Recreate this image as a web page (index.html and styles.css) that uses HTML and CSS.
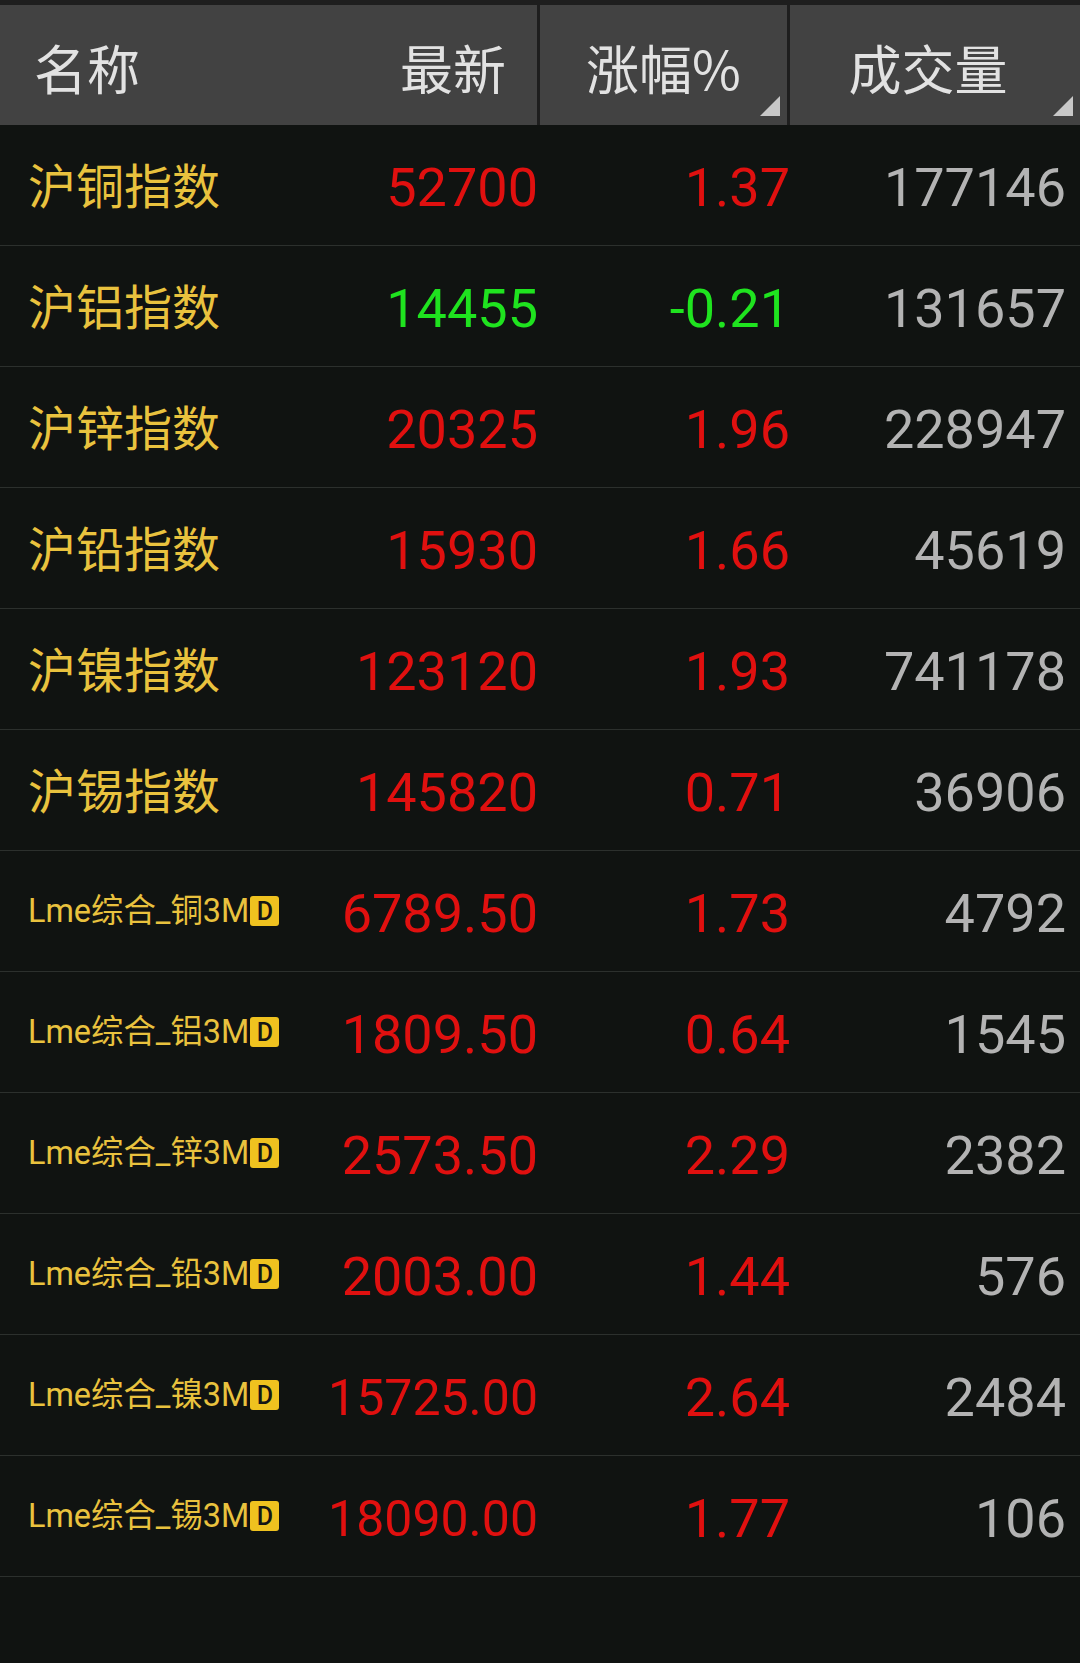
FILE: index.html
```html
<!DOCTYPE html>
<html lang="zh-CN">
<head>
<meta charset="utf-8">
<title>行情</title>
<link rel="stylesheet" href="styles.css">
</head>
<body>
<div class="page">
  <div class="topstrip"></div>
  <div class="header">
    <div class="hcell hfirst"><span>名称</span><span>最新</span></div>
    <div class="hcell hcenter">涨幅%<i class="sort"></i></div>
    <div class="hcell hcenter hlast">成交量<i class="sort"></i></div>
  </div>
  <div class="list">
    <div class="row"><div class="name">沪铜指数</div><div class="num up">52700</div><div class="num up">1.37</div><div class="num vol">177146</div></div>
    <div class="row"><div class="name">沪铝指数</div><div class="num down">14455</div><div class="num down">-0.21</div><div class="num vol">131657</div></div>
    <div class="row"><div class="name">沪锌指数</div><div class="num up">20325</div><div class="num up">1.96</div><div class="num vol">228947</div></div>
    <div class="row"><div class="name">沪铅指数</div><div class="num up">15930</div><div class="num up">1.66</div><div class="num vol">45619</div></div>
    <div class="row"><div class="name">沪镍指数</div><div class="num up">123120</div><div class="num up">1.93</div><div class="num vol">741178</div></div>
    <div class="row"><div class="name">沪锡指数</div><div class="num up">145820</div><div class="num up">0.71</div><div class="num vol">36906</div></div>
    <div class="row"><div class="name small">Lme综合_铜3M<span class="badge">D</span></div><div class="num up">6789.50</div><div class="num up">1.73</div><div class="num vol">4792</div></div>
    <div class="row"><div class="name small">Lme综合_铝3M<span class="badge">D</span></div><div class="num up">1809.50</div><div class="num up">0.64</div><div class="num vol">1545</div></div>
    <div class="row"><div class="name small">Lme综合_锌3M<span class="badge">D</span></div><div class="num up">2573.50</div><div class="num up">2.29</div><div class="num vol">2382</div></div>
    <div class="row"><div class="name small">Lme综合_铅3M<span class="badge">D</span></div><div class="num up">2003.00</div><div class="num up">1.44</div><div class="num vol">576</div></div>
    <div class="row"><div class="name small">Lme综合_镍3M<span class="badge">D</span></div><div class="num up fit">15725.00</div><div class="num up">2.64</div><div class="num vol">2484</div></div>
    <div class="row"><div class="name small">Lme综合_锡3M<span class="badge">D</span></div><div class="num up fit">18090.00</div><div class="num up">1.77</div><div class="num vol">106</div></div>
  </div>
</div>
</body>
</html>
```
FILE: styles.css
```css
* { box-sizing: border-box; margin: 0; padding: 0; }
html, body { background: #101311; }
body {
  width: 1080px;
  height: 1663px;
  overflow: hidden;
  font-family: Roboto, "Noto Sans CJK SC", sans-serif;
}
.page { display: flex; flex-direction: column; }
.topstrip { height: 5px; background: #1e1e1e; }
.header {
  display: grid;
  grid-template-columns: 537px 247px 290px;
  column-gap: 3px;
  background: #1e1e1e;
  height: 120px;
}
.hcell {
  background: #424242;
  color: #e2e2e2;
  font-family: "Noto Sans CJK SC", Roboto, sans-serif;
  font-size: 53px;
  display: flex;
  align-items: center;
  position: relative;
  line-height: 1;
  padding-top: 4px;
}
.hfirst { justify-content: space-between; padding-left: 34px; padding-right: 31px; }
.hcenter { justify-content: center; }
.hlast { padding-right: 14px; }
.sort {
  position: absolute;
  right: 7px;
  bottom: 9px;
  width: 20px;
  height: 20px;
  background: #c8c8c8;
  clip-path: polygon(100% 0, 100% 100%, 0 100%);
}
.list { display: flex; flex-direction: column; }
.row {
  display: grid;
  grid-template-columns: 262px 248px 252px 276px;
  padding: 0 14px 0 28px;
  height: 121px;
  border-bottom: 1px solid #2c302d;
  align-items: center;
}
.name {
  color: #e9c23e;
  font-family: "Noto Sans CJK SC", sans-serif;
  font-size: 48px;
  line-height: 1;
  white-space: nowrap;
  display: flex;
  align-items: center;
  padding-bottom: 4px;
}
.name.small {
  font-family: Roboto, "Noto Sans CJK SC", sans-serif;
  font-size: 32.4px;
  padding-bottom: 0;
}
.badge {
  display: inline-flex;
  align-items: center;
  justify-content: center;
  width: 29px;
  height: 30px;
  margin-left: 1px;
  background: #efc21f;
  color: #151515;
  border-radius: 3px;
  font-family: Roboto, sans-serif;
  font-weight: 500;
  font-size: 25px;
}
.num {
  text-align: right;
  font-family: Roboto, sans-serif;
  font-size: 54px;
  line-height: 1;
  white-space: nowrap;
  padding-top: 5px;
}
.num.fit { font-size: 50px; }
.up { color: #e0100f; }
.down { color: #1fe31f; }
.vol { color: #b3b3b3; }
```
